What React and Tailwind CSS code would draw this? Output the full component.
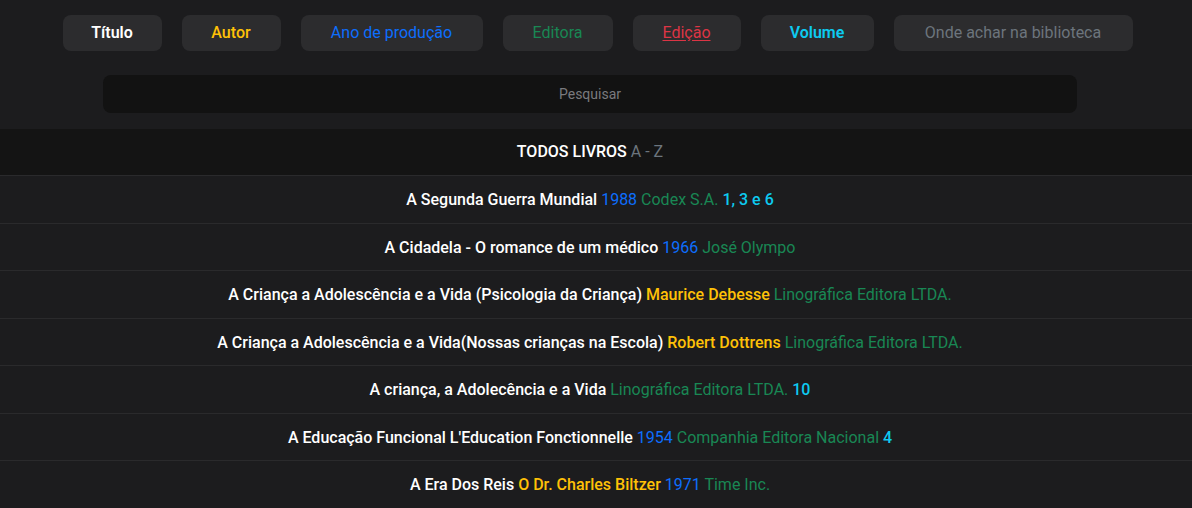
const filtros = [
  { label: "Título", cls: "text-white font-semibold w-[99px]" },
  { label: "Autor", cls: "text-[#ffc107] font-medium w-[99px]" },
  { label: "Ano de produção", cls: "text-[#0d6efd] w-[182px]" },
  { label: "Editora", cls: "text-[#198754] w-[110px]" },
  { label: "Edição", cls: "text-[#dc3545] underline underline-offset-2 w-[108px]" },
  { label: "Volume", cls: "text-[#0dcaf0] font-semibold w-[113px]" },
  { label: "Onde achar na biblioteca", cls: "text-[#6c757d] w-[239px]" },
];

const livros = [
  { titulo: "A Segunda Guerra Mundial", ano: "1988", editora: "Codex S.A.", volume: "1, 3 e 6" },
  { titulo: "A Cidadela - O romance de um médico", ano: "1966", editora: "José Olympo" },
  { titulo: "A Criança a Adolescência e a Vida (Psicologia da Criança)", autor: "Maurice Debesse", editora: "Linográfica Editora LTDA." },
  { titulo: "A Criança a Adolescência e a Vida(Nossas crianças na Escola)", autor: "Robert Dottrens", editora: "Linográfica Editora LTDA." },
  { titulo: "A criança, a Adolecência e a Vida", editora: "Linográfica Editora LTDA.", volume: "10" },
  { titulo: "A Educação Funcional L'Education Fonctionnelle", ano: "1954", editora: "Companhia Editora Nacional", volume: "4" },
  { titulo: "A Era Dos Reis", autor: "O Dr. Charles Biltzer", ano: "1971", editora: "Time Inc." },
];

export default function App() {
  return (
    <div className="min-h-screen bg-[#1c1c1e] font-['Roboto',sans-serif] text-[16px]">
      <div className="flex justify-center gap-[20px] pt-[15px] pl-[3px]">
        {filtros.map((f) => (
          <button
            key={f.label}
            className={`h-[36px] rounded-lg bg-[#2c2c2e] flex items-center justify-center ${f.cls}`}
          >
            {f.label}
          </button>
        ))}
      </div>

      <div className="pl-[103px] pr-[115px] pt-[24px] pb-[16px]">
        <div className="h-[38px] rounded-lg bg-[#121212] flex items-center justify-center text-[14px] text-[#7a7a7e]">
          Pesquisar
        </div>
      </div>

      <div className="h-[47px] pr-[12px] bg-[#141414] flex items-center justify-center font-medium text-white border-b border-[#2a2a2c]">
        <span>
          TODOS LIVROS <span className="text-[#6c757d] font-normal">A - Z</span>
        </span>
      </div>

      {livros.map((l) => (
        <div
          key={l.titulo}
          className="h-[47.5px] pr-[12px] pt-[2px] flex items-center justify-center border-b border-[#2a2a2c]"
        >
          <span className="whitespace-nowrap">
            <span className="text-white font-medium">{l.titulo}</span>
            {l.autor && <span className="text-[#ffc107] font-medium"> {l.autor}</span>}
            {l.ano && <span className="text-[#0d6efd]"> {l.ano}</span>}
            {l.editora && <span className="text-[#198754]"> {l.editora}</span>}
            {l.volume && <span className="text-[#0dcaf0] font-medium"> {l.volume}</span>}
          </span>
        </div>
      ))}
    </div>
  );
}
